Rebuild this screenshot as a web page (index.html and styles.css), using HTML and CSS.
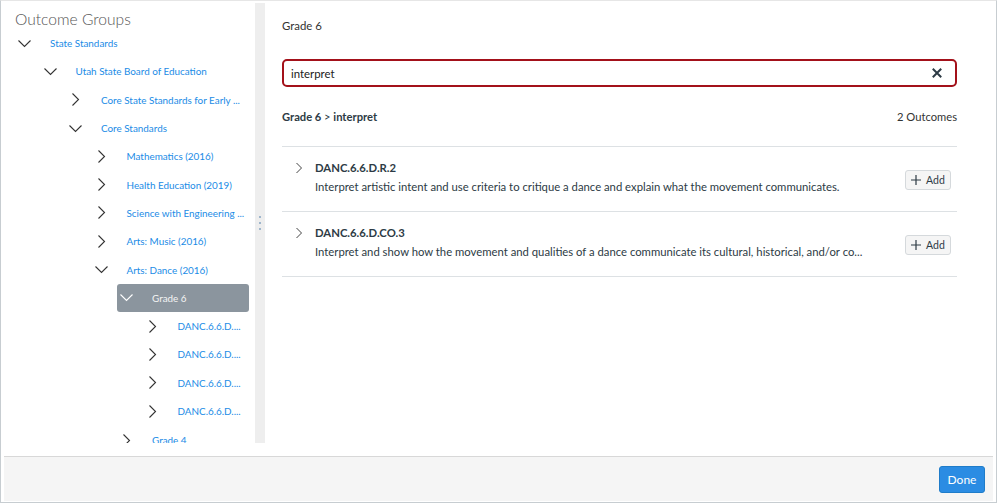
FILE: index.html
```html
<!DOCTYPE html>
<html lang="en">
<head>
  <meta charset="UTF-8">
  <title>Outcome Groups</title>
  <link rel="stylesheet" href="styles.css">
</head>
<body>
  <div class="modal">
    <div class="modal-body">
      <!-- Left: group tree -->
      <aside class="groups">
        <h2>Outcome Groups</h2>
        <ul class="tree">
          <li class="node d0"><svg class="chev" width="13" height="13" viewBox="0 0 13 13"><polyline points="0.5,3.5 6.5,9.5 12.5,3.5"/></svg><span>State Standards</span></li>
          <li class="node d1"><svg class="chev" width="13" height="13" viewBox="0 0 13 13"><polyline points="0.5,3.5 6.5,9.5 12.5,3.5"/></svg><span>Utah State Board of Education</span></li>
          <li class="node d2"><svg class="chev" width="13" height="13" viewBox="0 0 13 13"><polyline points="3.5,0.5 9.5,6.5 3.5,12.5"/></svg><span>Core State Standards for Early ...</span></li>
          <li class="node d2"><svg class="chev" width="13" height="13" viewBox="0 0 13 13"><polyline points="0.5,3.5 6.5,9.5 12.5,3.5"/></svg><span>Core Standards</span></li>
          <li class="node d3"><svg class="chev" width="13" height="13" viewBox="0 0 13 13"><polyline points="3.5,0.5 9.5,6.5 3.5,12.5"/></svg><span>Mathematics (2016)</span></li>
          <li class="node d3"><svg class="chev" width="13" height="13" viewBox="0 0 13 13"><polyline points="3.5,0.5 9.5,6.5 3.5,12.5"/></svg><span>Health Education (2019)</span></li>
          <li class="node d3"><svg class="chev" width="13" height="13" viewBox="0 0 13 13"><polyline points="3.5,0.5 9.5,6.5 3.5,12.5"/></svg><span>Science with Engineering ...</span></li>
          <li class="node d3"><svg class="chev" width="13" height="13" viewBox="0 0 13 13"><polyline points="3.5,0.5 9.5,6.5 3.5,12.5"/></svg><span>Arts: Music (2016)</span></li>
          <li class="node d3"><svg class="chev" width="13" height="13" viewBox="0 0 13 13"><polyline points="0.5,3.5 6.5,9.5 12.5,3.5"/></svg><span>Arts: Dance (2016)</span></li>
          <li class="node d4 selected"><svg class="chev" width="13" height="13" viewBox="0 0 13 13"><polyline points="0.5,3.5 6.5,9.5 12.5,3.5"/></svg><span>Grade 6</span></li>
          <li class="node d5"><svg class="chev" width="13" height="13" viewBox="0 0 13 13"><polyline points="3.5,0.5 9.5,6.5 3.5,12.5"/></svg><span>DANC.6.6.D....</span></li>
          <li class="node d5"><svg class="chev" width="13" height="13" viewBox="0 0 13 13"><polyline points="3.5,0.5 9.5,6.5 3.5,12.5"/></svg><span>DANC.6.6.D....</span></li>
          <li class="node d5"><svg class="chev" width="13" height="13" viewBox="0 0 13 13"><polyline points="3.5,0.5 9.5,6.5 3.5,12.5"/></svg><span>DANC.6.6.D....</span></li>
          <li class="node d5"><svg class="chev" width="13" height="13" viewBox="0 0 13 13"><polyline points="3.5,0.5 9.5,6.5 3.5,12.5"/></svg><span>DANC.6.6.D....</span></li>
          <li class="node d4 last"><svg class="chev" width="13" height="13" viewBox="0 0 13 13"><polyline points="3.5,0.5 9.5,6.5 3.5,12.5"/></svg><span>Grade 4</span></li>
        </ul>
      </aside>

      <div class="splitter">
        <span class="grip"></span>
        <span class="grip"></span>
        <span class="grip"></span>
      </div>

      <!-- Right: outcomes in the selected group -->
      <main class="outcomes">
        <div class="group-name">Grade 6</div>

        <div class="search">
          <span class="search-text">interpret</span>
          <svg class="clear" width="10" height="10" viewBox="0 0 10 10"><path d="M1.5 1.5 L8.5 8.5 M8.5 1.5 L1.5 8.5"/></svg>
        </div>

        <div class="crumbs">
          <span class="path">Grade 6 <span class="sep">&gt;</span> interpret</span>
          <span class="count">2 Outcomes</span>
        </div>

        <ul class="outcome-list">
          <li class="outcome">
            <svg class="ochev" width="8" height="12" viewBox="0 0 8 12"><polyline points="1.5,1 6.5,6 1.5,11"/></svg>
            <div class="outcome-text">
              <div class="code">DANC.6.6.D.R.2</div>
              <div class="desc">Interpret artistic intent and use criteria to critique a dance and explain what the movement communicates.</div>
            </div>
            <button class="add-btn"><svg class="plus" width="10" height="10" viewBox="0 0 10 10"><path d="M5 0 V10 M0 5 H10"/></svg>Add</button>
          </li>
          <li class="outcome">
            <svg class="ochev" width="8" height="12" viewBox="0 0 8 12"><polyline points="1.5,1 6.5,6 1.5,11"/></svg>
            <div class="outcome-text">
              <div class="code">DANC.6.6.D.CO.3</div>
              <div class="desc">Interpret and show how the movement and qualities of a dance communicate its cultural, historical, and/or co...</div>
            </div>
            <button class="add-btn"><svg class="plus" width="10" height="10" viewBox="0 0 10 10"><path d="M5 0 V10 M0 5 H10"/></svg>Add</button>
          </li>
        </ul>
      </main>
    </div>

    <footer class="modal-footer">
      <button class="done-btn">Done</button>
    </footer>
  </div>
</body>
</html>
```

FILE: styles.css
```css
body {
  margin: 0;
  background: #fff;
  font-family: Lato, "Open Sans", Arial, sans-serif;
  color: #2d3b45;
}
ul {
  list-style: none;
  margin: 0;
  padding: 0;
}

/* Modal frame */
.modal {
  width: 997px;
  height: 503px;
  box-sizing: border-box;
  border: 1px solid #c7cdd1;
  border-top-color: #e6e6e6;
  padding: 2px 3px 1px 3px;
  display: flex;
  flex-direction: column;
}
.modal-body {
  display: flex;
  height: 440px;
  margin-bottom: 13px;
}

/* Tree pane */
.groups {
  width: 251px;
  overflow: hidden;
  flex-shrink: 0;
  padding-left: 11px;
  box-sizing: border-box;
}
.groups h2 {
  margin: 6px 0 0 0;
  font-size: 15.6px;
  line-height: 20px;
  font-weight: 300;
  color: #555;
}
.node {
  display: flex;
  align-items: center;
  height: 28.3px;
  width: 132px;
  box-sizing: border-box;
  font-size: 9.9px;
  color: #1a8be6;
  white-space: nowrap;
  border-radius: 3px;
}
.node.last {
  padding-top: 2px;
}
.chev {
  flex-shrink: 0;
  margin-left: 3px;
  margin-right: 19px;
  fill: none;
  stroke: #333;
  stroke-width: 1.1;
}
.d0 { margin-left: 0; width: 234px; }
.d1 { margin-left: 25.5px; width: 208.5px; }
.d2 { margin-left: 51px; width: 183px; }
.d3 { margin-left: 76.5px; width: 157.5px; }
.d4 { margin-left: 102px; width: 132px; }
.d5 { margin-left: 127.5px; width: 106.5px; }
.selected {
  background: #8b959e;
  color: #f4f4f4;
}
.selected .chev {
  stroke: #fff;
}

/* Resize handle */
.splitter {
  width: 10px;
  background: #eeeeee;
  flex-shrink: 0;
  display: flex;
  flex-direction: column;
  align-items: center;
  justify-content: center;
  gap: 4px;
}
.grip {
  width: 2px;
  height: 2px;
  background: #9fb6cc;
}

/* Outcomes pane */
.outcomes {
  flex: 1;
  padding: 15px 36px 0 17px;
}
.group-name {
  font-size: 11.4px;
  line-height: 16px;
  color: #333;
}
.search {
  margin-top: 25px;
  height: 28px;
  box-sizing: border-box;
  border: 2px solid #a3111a;
  border-radius: 5px;
  display: flex;
  align-items: center;
  justify-content: space-between;
  padding: 0 13px 0 7px;
}
.search-text {
  font-size: 11.4px;
  color: #222;
}
.clear {
  stroke: #2d3b45;
  stroke-width: 2;
  stroke-linecap: square;
}
.crumbs {
  margin-top: 22px;
  display: flex;
  justify-content: space-between;
  font-size: 11.2px;
  line-height: 16px;
}
.path {
  font-weight: bold;
  color: #2d3b45;
}
.sep {
  font-weight: normal;
}
.count {
  color: #333;
}
.outcome-list {
  margin-top: 21px;
  border-top: 1px solid #dde1e4;
}
.outcome {
  display: flex;
  align-items: center;
  padding: 13px 6px 16px 13px;
  border-bottom: 1px solid #dde1e4;
}
.ochev {
  align-self: flex-start;
  margin-top: 2px;
  margin-right: 12px;
  fill: none;
  stroke: #444;
  stroke-width: 1;
}
.outcome-text {
  flex: 1;
}
.code {
  font-size: 11.3px;
  line-height: 16px;
  font-weight: bold;
  color: #2d3b45;
}
.desc {
  margin-top: 3px;
  font-size: 11.3px;
  line-height: 16px;
  color: #2d3b45;
}
.add-btn {
  display: flex;
  align-items: center;
  justify-content: center;
  gap: 5px;
  font-family: inherit;
  font-size: 10.5px;
  color: #2d3b45;
  background: #f5f5f5;
  border: 1px solid #d5d9dc;
  border-radius: 3px;
  height: 20px;
  width: 46px;
  padding: 0;
  margin-top: 4px;
}
.plus {
  stroke: #2d3b45;
  stroke-width: 1.2;
}

/* Footer */
.modal-footer {
  flex: 1;
  background: #f5f5f5;
  border-top: 1px solid #d8d8d8;
  display: flex;
  align-items: center;
  justify-content: flex-end;
  padding-right: 8px;
}
.done-btn {
  font-family: inherit;
  font-size: 12px;
  color: #fff;
  background: #2b8ce3;
  border: 1px solid #1f7cc9;
  border-radius: 3px;
  width: 46px;
  height: 27px;
  padding: 0;
}
```
